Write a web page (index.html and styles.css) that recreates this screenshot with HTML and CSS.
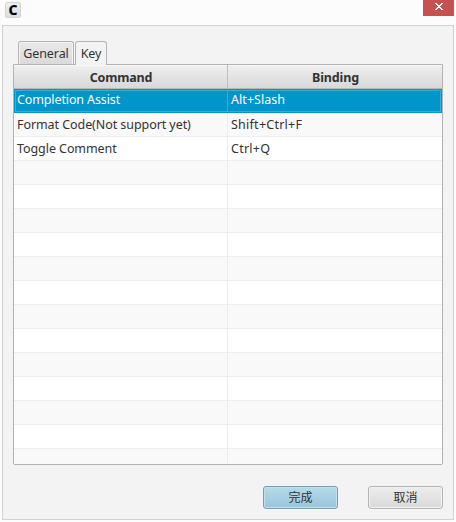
FILE: index.html
```html
<!DOCTYPE html>
<html lang="zh">
<head>
<meta charset="utf-8">
<title>Key</title>
<link rel="stylesheet" href="styles.css">
</head>
<body>
<div class="window">
  <header class="titlebar">
    <span class="app-icon">C</span>
    <button class="close" aria-label="Close"><svg width="8" height="7" viewBox="0 0 8 7" shape-rendering="crispEdges"><path fill="#fff" d="M0 0h2v1h1v1h2V1h1V0h2v1H7v1H6v1H5v1h1v1h1v1h1v1H6V6H5V5H3v1H2v1H0V6h1V5h1V4h1V3H2V2H1V1H0z"/></svg></button>
  </header>
  <main class="panel">
    <nav class="tabs">
      <div class="tab">General</div>
      <div class="tab active">Key</div>
    </nav>
    <div class="table">
      <div class="row head"><div>Command</div><div>Binding</div></div>
      <div class="row selected"><div>Completion Assist</div><div>Alt+Slash</div></div>
      <div class="row"><div>Format Code(Not support yet)</div><div>Shift+Ctrl+F</div></div>
      <div class="row"><div>Toggle Comment</div><div>Ctrl+Q</div></div>
      <div class="row"><div></div><div></div></div>
      <div class="row"><div></div><div></div></div>
      <div class="row"><div></div><div></div></div>
      <div class="row"><div></div><div></div></div>
      <div class="row"><div></div><div></div></div>
      <div class="row"><div></div><div></div></div>
      <div class="row"><div></div><div></div></div>
      <div class="row"><div></div><div></div></div>
      <div class="row"><div></div><div></div></div>
      <div class="row"><div></div><div></div></div>
      <div class="row"><div></div><div></div></div>
      <div class="row"><div></div><div></div></div>
      <div class="row"><div></div><div></div></div>
    </div>
    <footer class="actions">
      <button class="btn primary">完成</button>
      <button class="btn">取消</button>
    </footer>
  </main>
</div>
</body>
</html>
```
FILE: styles.css
```css
* { box-sizing: border-box; }
body {
  margin: 0;
  background: #fcfcfc;
  color: #333;
  font: 12.5px/18px "Noto Sans", "Noto Sans CJK SC", sans-serif;
  overflow: hidden;
}
button { font: inherit; color: inherit; padding: 0; }
.window { width: 456px; height: 522px; padding: 0 2px 2px; }
.titlebar { height: 25px; display: flex; justify-content: space-between; align-items: flex-start; }
.app-icon {
  width: 16px; height: 16px; margin: 2px 0 0 3px;
  border: 1px solid #d4d4d4; border-radius: 2px;
  background: linear-gradient(#f0f0f0, #dcdcdc);
  color: #000; font-weight: 800; font-size: 14px; line-height: 13px; text-align: center;
}
.close {
  width: 31px; height: 16px; border: 0; background: #c75050;
  display: flex; justify-content: center; padding: 3px 0 0 1px;
}
.panel {
  width: 452px; height: 495px; border: 1px solid #d2d2d2;
  background: #f3f3f3; padding: 15px 10px 0 10px;
}
.tabs { height: 23px; display: flex; gap: 1px; padding-left: 5px; }
.tab {
  width: 56px; height: 23px; border: 1px solid #b5b5b5; border-bottom: 0;
  border-radius: 3px 3px 0 0; background: linear-gradient(#e9e9e9, #dadada);
  box-shadow: inset 1px 1px #f3f3f3, inset -1px 0 #f3f3f3;
  line-height: 24px; text-align: center; letter-spacing: -0.1px;
}
.tab.active { width: 32px; height: 24px; background: #f3f3f3; position: relative; }
.table {
  width: 430px; height: 401px; overflow: hidden;
  border: 1px solid #b2b2b2; border-radius: 0 0 2px 2px; background: #fff;
}
.row { height: 24px; display: grid; grid-template-columns: 214px 1fr; border-bottom: 1px solid #ededed; }
.row:nth-child(odd) { background: #f9f9f9; }
.row > div { padding-left: 3px; line-height: 24px; height: 23px; white-space: nowrap; letter-spacing: 0.25px; }
.row > div:first-child { border-right: 1px solid #ededed; letter-spacing: -0.07px; }
.row.head {
  background: linear-gradient(#efefef, #d9d9d9); border-color: #b8b8b8;
  font-weight: 700; text-align: center; box-shadow: inset 0 1px #f8f8f8;
}
.row.head > div { padding: 0 0 0 1px; line-height: 25px; letter-spacing: -0.15px; }
.row.head > div:first-child { border-color: #bdbdbd; }
.row.selected {
  grid-template-columns: 213px 1fr;
  background: #0096c9; border: 1px solid #0096c9; color: #fff;
  box-shadow: inset 0 0 0 1px #35add7;
}
.row.selected > div { height: 22px; line-height: 20px; letter-spacing: 0.05px; }
.row.selected > div:first-child { padding-left: 2px; border-color: #35add7; letter-spacing: -0.12px; }
.actions { display: flex; justify-content: flex-end; gap: 30px; padding-top: 21px; }
.btn {
  width: 75px; height: 23px; border: 1px solid #b3b3b3; border-radius: 3px;
  background: linear-gradient(#ededed, #d9d9d9);
  box-shadow: inset 0 0 0 1px #f2f2f2, 0 1px #fafafa;
  line-height: 20px; font-size: 12px;
}
.btn.primary {
  border-color: #779fb3; background: linear-gradient(#b4daea, #9ac5db);
  box-shadow: inset 0 0 0 1px #c0e0ee, 0 1px #fafafa;
}
```
